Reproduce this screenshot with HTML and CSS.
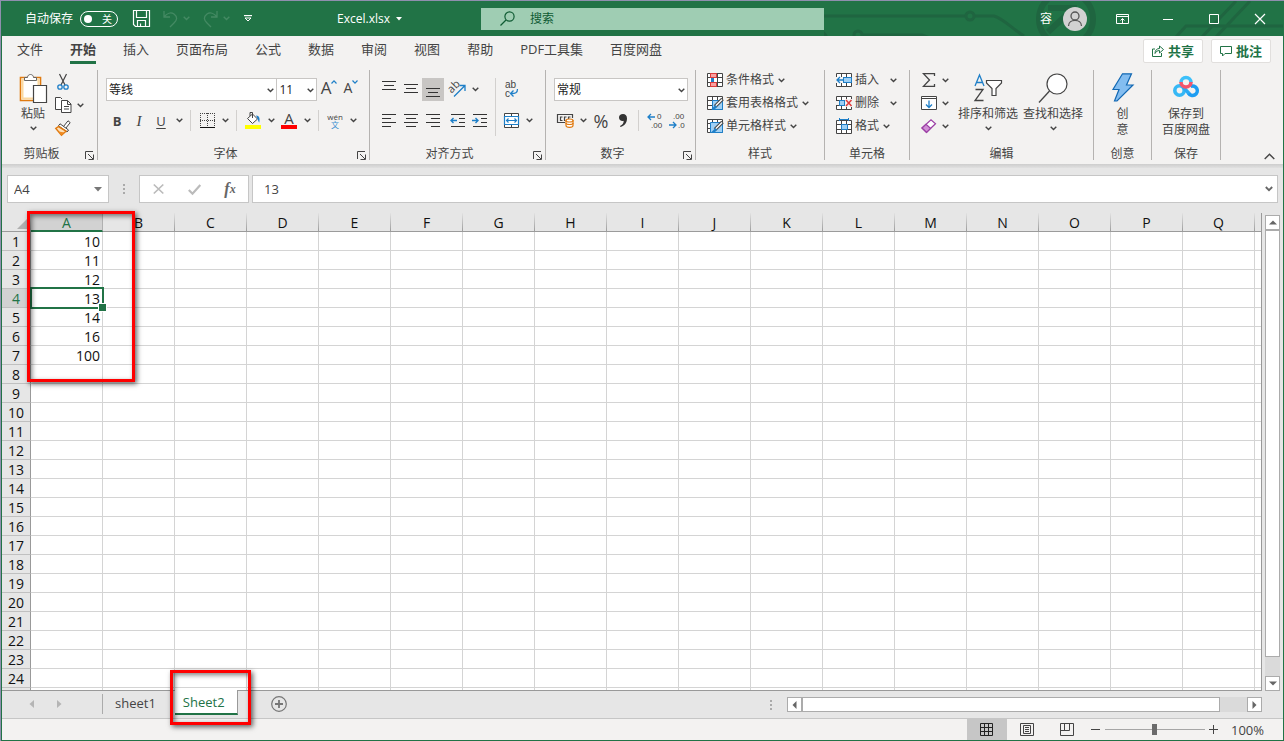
FILE: index.html
```html
<!DOCTYPE html>
<html lang="zh-CN">
<head>
    <meta charset="UTF-8">
    <meta name="viewport" content="width=device-width, initial-scale=1.0">
    <title>Excel.xlsx</title>
    <link rel="stylesheet" href="styles.css">
</head>
<body>
    <!-- Shared symbols -->
    <svg class="symbols" aria-hidden="true">
        <symbol id="chevron" viewBox="0 0 7 5"><path d="M.7 .8 3.5 3.6 6.3 .8" fill="none" stroke="currentColor" stroke-width="1.4"/></symbol>
        <symbol id="launcher" viewBox="0 0 9 9"><path d="M.5 8V.5H8M3 3l5 5M8.5 3.5v5h-5" fill="none" stroke="#444"/></symbol>
        <symbol id="grid" viewBox="0 0 16 14"><path d="M.5 .5h15v13H.5zM.5 4.5h15M.5 9.5h15M5.5 .5v13M10.5 .5v13" fill="#fff" stroke="#444"/></symbol>
    </svg>

    <div class="window">
        <header class="titlebar">
            <div class="titlebar-left">
                <label class="autosave" for="autosave">自动保存</label>
                <span class="toggle">
                    <input type="checkbox" id="autosave">
                    <span class="toggle-text">关</span>
                </span>
                <button class="quick save" aria-label="保存">
                    <svg width="17" height="17" viewBox="0 0 17 17" fill="none" stroke="#fff"><path d="M.5 .5h16v16H2.5l-2-2zM3.5 .5v7h10v-7M4.5 16.5v-6h8v6M7.5 16.5v-3" stroke-width="1.2"/></svg>
                </button>
                <button class="quick undo" aria-label="撤消">
                    <svg width="15" height="16" viewBox="0 0 15 16" fill="none" stroke="currentColor" stroke-width="1.3"><path d="M1 0v6h6M1 6C4 2 8 1 11 3c4 3 3 6 0 9l-4 4"/></svg>
                    <svg class="chev" width="7" height="5"><use href="#chevron"/></svg>
                </button>
                <button class="quick redo" aria-label="恢复">
                    <svg width="15" height="16" viewBox="0 0 15 16" fill="none" stroke="currentColor" stroke-width="1.3"><path d="M14 0v6H8M14 6C11 2 7 1 4 3c-4 3-3 6 0 9l4 4"/></svg>
                    <svg class="chev" width="7" height="5"><use href="#chevron"/></svg>
                </button>
                <button class="quick customize" aria-label="自定义快速访问工具栏">
                    <svg width="8" height="7" viewBox="0 0 8 7"><path d="M0 0h8v1.2H0z" fill="#fff"/><path d="M1 3h6L4 6z" fill="none" stroke="#fff"/></svg>
                </button>
                <button class="doc-name">Excel.xlsx <svg width="6" height="4" viewBox="0 0 6 4"><path d="M0 0h6L3 3.5z" fill="#fff"/></svg></button>
            </div>
            <label class="search">
                <svg width="15" height="15" viewBox="0 0 15 15" fill="none" stroke="#0f5b33" stroke-width="1.2"><circle cx="9.5" cy="5.5" r="4.6"/><path d="M6 9 .5 14.5"/></svg>
                <input type="text" placeholder="搜索" aria-label="搜索">
            </label>
            <div class="titlebar-right">
                <svg class="circuit" width="459" height="35" viewBox="0 0 459 35" fill="none" stroke="#1f6540" stroke-width="4">
                    <path d="M0 15h142M150 15h20c10 3 17 12 30 20M38 34h60l8 3M352 36l10-11h97M378 36l34-36M392 36l34-36" stroke-width="3"/>
                    <circle cx="146" cy="15" r="4" stroke-width="3"/>
                    <circle cx="34" cy="34" r="4" stroke-width="3"/>
                    <circle cx="-13" cy="44" r="17"/>
                    <circle cx="242" cy="18" r="27" stroke-width="6"/>
                    <path d="M224 7h26v22M224 31l24-22" stroke-width="6"/>
                </svg>
                <span class="user">容</span>
                <span class="avatar">
                    <svg width="24" height="24" viewBox="0 0 24 24" fill="none" stroke="#555" stroke-width="1.3"><circle cx="12" cy="9" r="4"/><path d="M5.500 19c0-7.500 13-7.500 13 0"/></svg>
                </span>
                <button class="win-btn" aria-label="功能区显示选项">
                    <svg width="13" height="10" viewBox="0 0 13 10" fill="none" stroke="#fff"><path d="M.5 .5h12v9H.5zM.5 2.500h12M6.500 9V4.500M4.500 6.500l2-2 2 2"/></svg>
                </button>
                <button class="win-btn" aria-label="最小化">
                    <svg width="10" height="10" viewBox="0 0 10 10"><path d="M0 5.500h10" stroke="#fff"/></svg>
                </button>
                <button class="win-btn" aria-label="最大化">
                    <svg width="10" height="10" viewBox="0 0 10 10"><path d="M.5 .5h9v9h-9z" fill="none" stroke="#fff"/></svg>
                </button>
                <button class="win-btn" aria-label="关闭">
                    <svg width="10" height="10" viewBox="0 0 10 10"><path d="M0 0l10 10M10 0 0 10" stroke="#fff" stroke-width="1.200"/></svg>
                </button>
            </div>
        </header>

        <nav class="tabs">
            <button class="tab">文件</button>
            <button class="tab active">开始</button>
            <button class="tab">插入</button>
            <button class="tab">页面布局</button>
            <button class="tab">公式</button>
            <button class="tab">数据</button>
            <button class="tab">审阅</button>
            <button class="tab">视图</button>
            <button class="tab">帮助</button>
            <button class="tab">PDF工具集</button>
            <button class="tab">百度网盘</button>
            <div class="tab-actions">
                <button class="action">
                    <svg width="12" height="12" viewBox="0 0 12 12" fill="none" stroke="#217346"><path d="M3 4H.5v7.500h9V8M3 8.500C3 5 5 3.500 7.500 3.500V1l4 3.500-4 3.500V5.500C5.500 5.500 4 6.500 3 8.500z"/></svg>
                    共享
                </button>
                <button class="action">
                    <svg width="12" height="12" viewBox="0 0 12 12" fill="none" stroke="#217346"><path d="M.5 1.500h11v7H5l-2.500 2.500V8.500h-2z"/></svg>
                    批注
                </button>
            </div>
        </nav>

        <section class="ribbon">
            <div class="group clipboard">
                <div class="group-body">
                    <button class="big paste">
                        <svg width="28" height="32" viewBox="0 0 28 32"><path d="M1.500 4.500h20v23h-20z" fill="#fff" stroke="#e07a10" stroke-width="1.600"/><path d="M3.500 6.500h16v19h-16z" fill="#fff" stroke="#fbd9a0" stroke-width="2"/><path d="M5.500 7.500v-3h3c0-4 6-4 6 0h3v3z" fill="#fff" stroke="#666"/><path d="M14.500 12.500h13v17h-13z" fill="#fff" stroke="#444" stroke-width="1.200"/></svg>
                        <span>粘贴</span>
                        <svg class="chev" width="7" height="5"><use href="#chevron"/></svg>
                    </button>
                    <div class="list">
                        <button class="item" aria-label="剪切">
                            <svg width="16" height="16" viewBox="0 0 16 16" fill="none"><path d="M4.500 0l5.500 11M11.500 0 6 11" stroke="#444" stroke-width="1.200"/><circle cx="5" cy="13" r="2.200" stroke="#1e7fc8" stroke-width="1.300"/><circle cx="11" cy="13" r="2.200" stroke="#1e7fc8" stroke-width="1.300"/></svg>
                        </button>
                        <button class="item" aria-label="复制">
                            <svg width="17" height="16" viewBox="0 0 17 16" fill="#fff" stroke="#444"><path d="M6.500 12.500h-6V.5h5l1.500 1.500"/><path d="M6.500 3.500h6l3.500 3.500v8.500H6.500zM12.500 3.500v4h3.500M9 9.500h5M9 12h5"/></svg>
                            <svg class="chev" width="7" height="5"><use href="#chevron"/></svg>
                        </button>
                        <button class="item" aria-label="格式刷">
                            <svg width="16" height="16" viewBox="0 0 16 16"><path d="M8.500 6.500 13 .8l2.200 1.800-4.700 6z" fill="#fff" stroke="#444"/><path d="M5 3.800l8.500 6.200-1.500 2L3.500 5.800z" fill="#fff" stroke="#444"/><path d="M3.500 6.500.8 8.500 6.500 15.200l4.500-4z" fill="#fde0b8" stroke="#e07a10" stroke-width="1.500"/><path d="M3.500 11.500 6.500 15l3-2.500z" fill="#f08a20"/></svg>
                        </button>
                    </div>
                </div>
                <div class="group-label">剪贴板<button class="launcher" aria-label="剪贴板设置"><svg width="9" height="9"><use href="#launcher"/></svg></button></div>
            </div>

            <div class="group font">
                <div class="group-body rows">
                    <div class="row">
                        <span class="combo name">
                            <select aria-label="字体"><option>等线</option></select>
                            <svg class="chev" width="7" height="5"><use href="#chevron"/></svg>
                        </span>
                        <span class="combo size">
                            <select aria-label="字号"><option>11</option></select>
                            <svg class="chev" width="7" height="5"><use href="#chevron"/></svg>
                        </span>
                        <button class="btn grow" aria-label="增大字号"><span>A</span><svg width="6" height="4" viewBox="0 0 6 4"><path d="M.5 3.500 3 .8l2.500 2.700" fill="none" stroke="#1e7fc8" stroke-width="1.200"/></svg></button>
                        <button class="btn shrink" aria-label="减小字号"><span>A</span><svg width="6" height="4" viewBox="0 0 6 4"><path d="M.5 .5 3 3.200 5.500 .5" fill="none" stroke="#1e7fc8" stroke-width="1.200"/></svg></button>
                    </div>
                    <div class="row">
                        <button class="btn bold">B</button>
                        <button class="btn italic">I</button>
                        <button class="btn underline">U</button>
                        <button class="drop" aria-label="下划线选项"><svg class="chev" width="7" height="5"><use href="#chevron"/></svg></button>
                        <span class="sep"></span>
                        <button class="btn" aria-label="边框"><svg width="15" height="15" viewBox="0 0 15 15"><path d="M.5 0v14M14.500 0v14M7.500 0v14M0 .5h15M0 7.500h15" stroke="#444" stroke-dasharray="1 1" fill="none"/><path d="M0 14.500h15" stroke="#111"/></svg></button>
                        <button class="drop" aria-label="边框选项"><svg class="chev" width="7" height="5"><use href="#chevron"/></svg></button>
                        <span class="sep"></span>
                        <button class="btn" aria-label="填充颜色"><svg width="16" height="17" viewBox="0 0 16 17"><path d="M2.500 6.500 7.500 2l5 5-5 4.500z" fill="#fff" stroke="#444"/><path d="M7.500 6V.5H5V4" fill="none" stroke="#444"/><path d="M11 3.500c3.500 0 4 3 3.300 7-1-.5-1.500-4-3.300-7z" fill="#1e7fc8"/><path d="M0 13h16v4H0z" fill="#ff0"/></svg></button>
                        <button class="drop" aria-label="填充颜色选项"><svg class="chev" width="7" height="5"><use href="#chevron"/></svg></button>
                        <button class="btn color" aria-label="字体颜色"><span>A</span></button>
                        <button class="drop" aria-label="字体颜色选项"><svg class="chev" width="7" height="5"><use href="#chevron"/></svg></button>
                        <span class="sep"></span>
                        <button class="btn phonetic"><span>wén</span><span class="han">文</span></button>
                        <button class="drop" aria-label="拼音选项"><svg class="chev" width="7" height="5"><use href="#chevron"/></svg></button>
                    </div>
                </div>
                <div class="group-label">字体<button class="launcher" aria-label="字体设置"><svg width="9" height="9"><use href="#launcher"/></svg></button></div>
            </div>

            <div class="group align">
                <div class="group-body">
                    <div class="rows">
                        <div class="row">
                            <button class="btn" aria-label="顶端对齐"><svg width="14" height="17" viewBox="0 0 14 17"><path d="M0 .5h14M2 4.500h10M0 8.500h14" stroke="#333"/></svg></button>
                            <button class="btn" aria-label="垂直居中"><svg width="14" height="17" viewBox="0 0 14 17"><path d="M0 3.500h14M2 7.500h10M0 11.500h14" stroke="#333"/></svg></button>
                            <button class="btn pressed" aria-label="底端对齐"><svg width="14" height="17" viewBox="0 0 14 17"><path d="M0 7.500h14M2 11.500h10M0 15.500h14" stroke="#333"/></svg></button>
                            <button class="btn indent" aria-label="方向"><svg width="17" height="17" viewBox="0 0 17 17"><text x="5" y="9" text-anchor="middle" transform="rotate(-45 5 6)" font-size="11" fill="#444">ab</text><path d="M5 15.500 15.500 5M10.500 4.500h5.500V10" fill="none" stroke="#1e7fc8" stroke-width="1.300"/></svg></button>
                            <button class="drop" aria-label="方向选项"><svg class="chev" width="7" height="5"><use href="#chevron"/></svg></button>
                        </div>
                        <div class="row">
                            <button class="btn" aria-label="左对齐"><svg width="14" height="13" viewBox="0 0 14 13"><path d="M0 .5h14M0 4.500h9M0 8.500h14M0 12.500h9" stroke="#333"/></svg></button>
                            <button class="btn" aria-label="居中"><svg width="14" height="13" viewBox="0 0 14 13"><path d="M0 .5h14M2 4.500h10M0 8.500h14M2 12.500h10" stroke="#333"/></svg></button>
                            <button class="btn" aria-label="右对齐"><svg width="14" height="13" viewBox="0 0 14 13"><path d="M0 .5h14M5 4.500h9M0 8.500h14M5 12.500h9" stroke="#333"/></svg></button>
                            <button class="btn indent" aria-label="减少缩进"><svg width="15" height="13" viewBox="0 0 15 13"><path d="M1 .5h14M9 4.500h6M9 8.500h6M1 12.500h14" stroke="#333"/><path d="M7 6.500H1M3.500 4 1 6.500 3.500 9" fill="none" stroke="#1e7fc8" stroke-width="1.400"/></svg></button>
                            <button class="btn" aria-label="增加缩进"><svg width="15" height="13" viewBox="0 0 15 13"><path d="M1 .5h14M9 4.500h6M9 8.500h6M1 12.500h14" stroke="#333"/><path d="M0 6.500h6M3.500 4 6 6.500 3.500 9" fill="none" stroke="#1e7fc8" stroke-width="1.400"/></svg></button>
                        </div>
                    </div>
                    <span class="tall-sep"></span>
                    <div class="rows">
                        <div class="row">
                            <button class="btn wrap" aria-label="自动换行"><svg width="15" height="17" viewBox="0 0 15 17"><text x="1" y="7" font-size="10">ab</text><text x="1" y="16" font-size="10">c</text><path d="M13.500 8c0 4-2 4.500-6.500 4.500M9.500 9.500 6.500 12.500l3 3" fill="none" stroke="#1e7fc8" stroke-width="1.300"/></svg></button>
                        </div>
                        <div class="row">
                            <button class="btn" aria-label="合并后居中"><svg width="15" height="15" viewBox="0 0 15 15"><path d="M.5 .5h14v14H.5zM7.500 .5v14" fill="#fff" stroke="#444"/><path d="M.5 3.500h14v8H.5z" fill="#fff" stroke="#1e7fc8" stroke-width="1.200"/><path d="M2.500 7.500h10M4.500 5.500l-2 2 2 2M10.500 5.500l2 2-2 2" fill="none" stroke="#1e7fc8" stroke-width="1.200"/></svg></button>
                            <button class="drop" aria-label="合并选项"><svg class="chev" width="7" height="5"><use href="#chevron"/></svg></button>
                        </div>
                    </div>
                </div>
                <div class="group-label">对齐方式<button class="launcher" aria-label="对齐设置"><svg width="9" height="9"><use href="#launcher"/></svg></button></div>
            </div>

            <div class="group number">
                <div class="group-body rows">
                    <div class="row">
                        <span class="combo format">
                            <select aria-label="数字格式"><option>常规</option></select>
                            <svg class="chev" width="7" height="5"><use href="#chevron"/></svg>
                        </span>
                    </div>
                    <div class="row">
                        <button class="btn" aria-label="会计数字格式"><svg width="17" height="15" viewBox="0 0 17 15"><path d="M8 9.500H.5v-8h15V5M5.500 4h-2v3.500h2M7.500 8V4h2M11.500 6V4h2" fill="none" stroke="#444" stroke-width="1.200"/><path d="M9 7.500v5c0 2.500 7 2.500 7 0v-5z" fill="#fff" stroke="#e07a10" stroke-width="1.200"/><ellipse cx="12.500" cy="7.500" rx="3.500" ry="1.500" fill="#fff" stroke="#e07a10" stroke-width="1.200"/><path d="M9 10c0 2 7 2 7 0" fill="none" stroke="#e07a10" stroke-width="1.200"/></svg></button>
                        <button class="drop" aria-label="会计格式选项"><svg class="chev" width="7" height="5"><use href="#chevron"/></svg></button>
                        <button class="btn percent">%</button>
                        <button class="btn" aria-label="千位分隔样式"><svg width="8" height="13" viewBox="0 0 8 13"><path d="M4 0C1.500 0 0 1.500 0 3.500S1.500 7 3.500 7c.5 0 1-.2 1.200-.3C4.700 9 3.500 11 1 12l.5 1C5.500 12 8 8.500 8 4.500 8 1.500 6.500 0 4 0z" fill="#333"/></svg></button>
                        <span class="sep"></span>
                        <button class="btn decimals" aria-label="增加小数位数"><svg width="16" height="17" viewBox="0 0 16 17"><text x="10" y="7" font-size="8">0</text><text x="4" y="16" font-size="8">.00</text><path d="M8 5H1M4 2 1 5l3 3" fill="none" stroke="#1e7fc8" stroke-width="1.300"/></svg></button>
                        <button class="btn decimals" aria-label="减少小数位数"><svg width="16" height="17" viewBox="0 0 16 17"><text x="4" y="7" font-size="8">.00</text><text x="9" y="16" font-size="8">.0</text><path d="M0 13h7M4 10l3 3-3 3" fill="none" stroke="#1e7fc8" stroke-width="1.300"/></svg></button>
                    </div>
                </div>
                <div class="group-label">数字<button class="launcher" aria-label="数字设置"><svg width="9" height="9"><use href="#launcher"/></svg></button></div>
            </div>

            <div class="group styles">
                <div class="group-body list">
                    <button class="item">
                        <svg width="16" height="14" viewBox="0 0 16 14"><use href="#grid" width="16" height="14"/><path d="M3.500 .5h6v4h-6zM3.500 9.500h6v4h-6z" fill="#f9a0a0" stroke="#e03a3a"/><path d="M4 5h3v4H4z" fill="#1e7fc8"/></svg>
                        <span>条件格式</span><svg class="chev" width="7" height="5"><use href="#chevron"/></svg>
                    </button>
                    <button class="item">
                        <svg width="16" height="14" viewBox="0 0 16 14"><use href="#grid" width="16" height="14"/><path d="M5.500 4.500h10v9h-10z" fill="#9fd0f5" stroke="#1e7fc8"/><path d="M15.500 3 8 10.500" stroke="#444" stroke-width="3.500"/><path d="M15 3.500 8 10.500" stroke="#fff" stroke-width="1.500"/><path d="M8.500 9 5 12.500 4.500 14h3L10 10.500z" fill="#1e7fc8"/></svg>
                        <span>套用表格格式</span><svg class="chev" width="7" height="5"><use href="#chevron"/></svg>
                    </button>
                    <button class="item">
                        <svg width="16" height="14" viewBox="0 0 16 14"><use href="#grid" width="16" height="14"/><path d="M3.500 3.500h12v10h-12z" fill="#9fd0f5" stroke="#1e7fc8"/><path d="M15.500 3 8 10.500" stroke="#444" stroke-width="3.500"/><path d="M15 3.500 8 10.500" stroke="#fff" stroke-width="1.500"/><path d="M8.500 9 5 12.500 4.500 14h3L10 10.500z" fill="#1e7fc8"/></svg>
                        <span>单元格样式</span><svg class="chev" width="7" height="5"><use href="#chevron"/></svg>
                    </button>
                </div>
                <div class="group-label">样式</div>
            </div>

            <div class="group cells">
                <div class="group-body list">
                    <button class="item wide">
                        <svg width="16" height="14" viewBox="0 0 16 14"><use href="#grid" width="16" height="14"/><path d="M7.500 4.500h8v5h-8z" fill="#9fd0f5" stroke="#1e7fc8"/><path d="M0 4h7v6H0z" fill="#f3f2f1"/><path d="M8 7H1M4 4 1 7l3 3" fill="none" stroke="#1e7fc8" stroke-width="1.300"/></svg>
                        <span>插入</span><svg class="chev" width="7" height="5"><use href="#chevron"/></svg>
                    </button>
                    <button class="item wide">
                        <svg width="16" height="14" viewBox="0 0 16 14"><use href="#grid" width="16" height="14"/><path d="M9 3h7v8H9zM0 5h4v4H0z" fill="#f3f2f1"/><path d="M3.500 4.500h5v5h-5z" fill="#9fd0f5" stroke="#1e7fc8"/><path d="M10 4l5.500 6M15.500 4 10 10" stroke="#e03a3a" stroke-width="1.500"/></svg>
                        <span>删除</span><svg class="chev" width="7" height="5"><use href="#chevron"/></svg>
                    </button>
                    <button class="item">
                        <svg width="16" height="16" viewBox="0 0 16 16"><use href="#grid" y="2" width="16" height="14"/><path d="M5.500 6.500h6v5h-6z" fill="#9fd0f5" stroke="#1e7fc8"/><path d="M3.500 0v3M12.500 0v3M3.500 1.500h9" stroke="#1e7fc8"/></svg>
                        <span>格式</span><svg class="chev" width="7" height="5"><use href="#chevron"/></svg>
                    </button>
                </div>
                <div class="group-label">单元格</div>
            </div>

            <div class="group editing">
                <div class="group-body">
                    <div class="list">
                        <button class="item" aria-label="自动求和">
                            <svg width="16" height="14" viewBox="0 0 16 14"><path d="M13.500 3V.7H2.500L8.500 7l-6 6.300h11V11" fill="none" stroke="#444" stroke-width="1.300"/></svg>
                            <svg class="chev" width="7" height="5"><use href="#chevron"/></svg>
                        </button>
                        <button class="item" aria-label="填充">
                            <svg width="16" height="14" viewBox="0 0 16 14"><path d="M.5 .5h15v13H.5zM.5 2.500h15" fill="#fff" stroke="#444"/><path d="M8 4.500v7M5 8.500l3 3 3-3" fill="none" stroke="#1e7fc8" stroke-width="1.300"/></svg>
                            <svg class="chev" width="7" height="5"><use href="#chevron"/></svg>
                        </button>
                        <button class="item" aria-label="清除">
                            <svg width="16" height="14" viewBox="0 0 16 14"><path d="M1 9 10 .7l4.500 4L5.500 13.300z" fill="#fff" stroke="#9b3fa5" stroke-width="1.200"/><path d="M1 9l4-3.700 4.500 4-4 4z" fill="#d08fd6" stroke="#9b3fa5" stroke-width="1.200"/></svg>
                            <svg class="chev" width="7" height="5"><use href="#chevron"/></svg>
                        </button>
                    </div>
                    <button class="big">
                        <svg width="30" height="32" viewBox="0 0 30 32"><path d="M2 13 6.500 2 11 13M3.500 9.500h6" fill="none" stroke="#1e7fc8" stroke-width="1.300"/><path d="M2.500 16.500H10L2 27.500h8.500" fill="none" stroke="#444" stroke-width="1.300"/><path d="M13.500 7.500h15V10L23 15.500v7h-4v-7L13.500 10z" fill="#fff" stroke="#444" stroke-width="1.200"/></svg>
                        <span>排序和筛选</span>
                        <svg class="chev" width="7" height="5"><use href="#chevron"/></svg>
                    </button>
                    <button class="big">
                        <svg width="30" height="32" viewBox="0 0 30 32"><circle cx="19" cy="11" r="10" fill="#fff" stroke="#444" stroke-width="1.200"/><path d="M11.500 18 1 29.500" stroke="#444" stroke-width="1.300"/></svg>
                        <span>查找和选择</span>
                        <svg class="chev" width="7" height="5"><use href="#chevron"/></svg>
                    </button>
                </div>
                <div class="group-label">编辑</div>
            </div>

            <div class="group ideas">
                <div class="group-body centered">
                    <button class="big">
                        <svg width="22" height="32" viewBox="0 0 22 32"><path d="M10.500 .8h9L14.500 12h6.500L5 28h-2.500l4.500-11.500H1z" fill="#83bdf0" stroke="#1268b3" stroke-width="1.200"/></svg>
                        <span>创<br>意</span>
                    </button>
                </div>
                <div class="group-label">创意</div>
            </div>

            <div class="group netdisk">
                <div class="group-body centered">
                    <button class="big">
                        <svg width="26" height="32" viewBox="0 0 26 32" fill="none" stroke-width="3.600"><circle cx="6.500" cy="17.500" r="4.700" stroke="#36b8f5"/><path d="M15.500 20a4.700 4.700 0 1 0 2-6.500" stroke="#1e9df2"/><path d="M10 14l6 6.500" stroke="#2aaaf4"/><path d="M8 9.500a5 5 0 0 1 10 0" stroke="#3cc0fa"/><path d="M8 9a5 5 0 0 0 10 0" stroke="#f4556c"/></svg>
                        <span>保存到<br>百度网盘</span>
                    </button>
                </div>
                <div class="group-label">保存</div>
            </div>

            <button class="collapse" aria-label="折叠功能区"><svg width="11" height="7" viewBox="0 0 11 7"><path d="M.7 6 5.500 1.200 10.300 6" fill="none" stroke="#444" stroke-width="1.400"/></svg></button>
        </section>

        <section class="formula-bar">
            <div class="name-box">
                <input type="text" value="A4" aria-label="名称框">
                <button aria-label="名称列表"><svg width="8" height="5" viewBox="0 0 8 5"><path d="M0 0h8L4 4.500z" fill="#777"/></svg></button>
            </div>
            <span class="dots"></span>
            <div class="formula-buttons">
                <button aria-label="取消"><svg width="11" height="10" viewBox="0 0 11 10"><path d="M.8 .5l9.500 9M10.300 .5l-9.500 9" stroke="#bbb" stroke-width="1.700"/></svg></button>
                <button aria-label="输入"><svg width="13" height="11" viewBox="0 0 13 11"><path d="M.8 6l3.700 3.700L12.300 1" fill="none" stroke="#bbb" stroke-width="2.200"/></svg></button>
                <button class="fx"><i>f</i><i class="x">x</i></button>
            </div>
            <div class="formula">
                <input type="text" value="13" aria-label="编辑栏">
                <button aria-label="展开编辑栏"><svg width="8" height="6" viewBox="0 0 8 6"><path d="M.8 1 4 4.200 7.200 1" fill="none" stroke="#666" stroke-width="1.800"/></svg></button>
            </div>
        </section>

        <main class="workspace">
            <div class="sheet">
                <table class="cells-table">
                    <thead><tr id="columnHeaders"></tr></thead>
                    <tbody id="rows"></tbody>
                </table>
            </div>
            <div class="vscroll">
                <button aria-label="向上滚动"><svg width="8" height="5" viewBox="0 0 8 5"><path d="M0 4.500h8L4 .5z" fill="#666"/></svg></button>
                <div class="thumb"></div>
                <div class="track"></div>
                <button aria-label="向下滚动"><svg width="8" height="5" viewBox="0 0 8 5"><path d="M0 .5h8L4 4.500z" fill="#666"/></svg></button>
            </div>
            <div class="mark mark-data"></div>
        </main>

        <div class="sheet-tabs">
            <button class="nav-arrow" aria-label="上一张"><svg width="5" height="8" viewBox="0 0 5 8"><path d="M5 0v8L.5 4z" fill="#b5b5b5"/></svg></button>
            <button class="nav-arrow" aria-label="下一张"><svg width="5" height="8" viewBox="0 0 5 8"><path d="M0 0v8l4.500-4z" fill="#b5b5b5"/></svg></button>
            <div class="tab-list">
                <button class="sheet-tab">sheet1</button>
                <button class="sheet-tab current">Sheet2<span class="mark mark-tab"></span></button>
            </div>
            <button class="add-sheet" aria-label="新工作表"><svg width="16" height="16" viewBox="0 0 16 16" fill="none" stroke="#767676"><circle cx="8" cy="8" r="7.300" stroke-width="1.200"/><path d="M8 4v8M4 8h8" stroke-width="1.800"/></svg></button>
            <span class="dots"></span>
            <div class="hscroll">
                <button aria-label="向左滚动"><svg width="5" height="8" viewBox="0 0 5 8"><path d="M4.500 0v8L.5 4z" fill="#666"/></svg></button>
                <div class="thumb"></div>
                <div class="track"></div>
                <button aria-label="向右滚动"><svg width="5" height="8" viewBox="0 0 5 8"><path d="M.5 0v8l4-4z" fill="#666"/></svg></button>
            </div>
        </div>

        <footer class="status">
            <button class="view on" aria-label="普通"><svg width="13" height="13" viewBox="0 0 13 13"><path d="M.5 .5h12v12H.5zM.5 4.500h12M.5 8.500h12M4.500 .5v12M8.500 .5v12" fill="none" stroke="#222"/></svg></button>
            <button class="view" aria-label="页面布局视图"><svg width="14" height="13" viewBox="0 0 14 13"><path d="M.5 .5h13v12H.5zM3.500 2.500h7v8h-7zM5 4.500h4M5 6.500h4M5 8.500h4" fill="none" stroke="#444"/></svg></button>
            <button class="view" aria-label="分页预览"><svg width="14" height="13" viewBox="0 0 14 13"><path d="M.5 .5h13v12H.5zM4.500 .5v7M9.500 .5v7M.5 7.500h9" fill="none" stroke="#444"/></svg></button>
            <button class="zoom-btn" aria-label="缩小"><svg width="9" height="9" viewBox="0 0 9 9"><path d="M0 4.500h9" stroke="#444"/></svg></button>
            <input class="zoom" type="range" min="0" max="100" value="50" aria-label="缩放">
            <button class="zoom-btn" aria-label="放大"><svg width="9" height="9" viewBox="0 0 9 9"><path d="M0 4.500h9M4.500 0v9" stroke="#444"/></svg></button>
            <span class="zoom-value">100%</span>
        </footer>
    </div>

    <script src="script.js"></script>
</body>
</html>
```

FILE: styles.css
```css
* {
    box-sizing: border-box;
}

body {
    margin: 0;
    background: #8f8fae;
    color: #444;
    font-family: "Open Sans", "Noto Sans CJK SC", sans-serif;
    font-size: 12px;
    line-height: 16px;
}

button,
input,
select {
    margin: 0;
    padding: 0;
    border: 0;
    background: none;
    color: inherit;
    font: inherit;
    outline: 0;
}

button {
    display: flex;
    align-items: center;
    justify-content: center;
    flex: none;
}

svg {
    display: block;
    flex: none;
    overflow: visible;
}

.symbols {
    position: absolute;
    width: 0;
    height: 0;
}

.window {
    display: flex;
    flex-direction: column;
    height: calc(100vh - 1px);
    margin: 1px 0 0 1px;
    border: 1px solid #217346;
    border-top: 0;
    background: #e6e6e6;
    overflow: hidden;
}

/* Title bar */
.titlebar {
    display: flex;
    align-items: center;
    height: 35px;
    background: #217346;
    color: #fff;
}

.titlebar-left {
    display: flex;
    align-items: center;
    flex: 1;
    padding-left: 23px;
}

.toggle {
    position: relative;
    margin: 0 15px 0 7px;
}

.toggle input {
    display: block;
    appearance: none;
    width: 38px;
    height: 16px;
    border: 1px solid #fff;
    border-radius: 8px;
}

.toggle input::before {
    content: "";
    display: block;
    width: 8px;
    height: 8px;
    margin: 3px;
    border-radius: 50%;
    background: #fff;
}

.toggle-text {
    position: absolute;
    top: 0;
    right: 6px;
    font-size: 10px;
    pointer-events: none;
}

.quick {
    gap: 5px;
}

.undo,
.redo {
    color: #448a63;
    margin-left: 13px;
}

.customize {
    margin-left: 14px;
}

.doc-name {
    gap: 6px;
    margin: 0 79px 0 auto;
}

.search {
    display: flex;
    align-items: center;
    gap: 15px;
    width: 343px;
    height: 22px;
    padding-left: 19px;
    background: #9fcdb3;
    color: #0f5b33;
}

.search input {
    flex: 1;
    min-width: 0;
}

.search input::placeholder {
    color: #0f5b33;
    opacity: 1;
}

.titlebar-right {
    position: relative;
    display: flex;
    align-items: center;
    justify-content: flex-end;
    width: 459px;
    height: 35px;
    overflow: hidden;
}

.circuit {
    position: absolute;
    top: 0;
    right: 0;
}

.user,
.avatar,
.win-btn {
    position: relative;
}

.avatar {
    margin: 0 12px 0 11px;
    border-radius: 50%;
    background: #d2d2d2;
}

.win-btn {
    width: 46px;
    height: 35px;
}

/* Ribbon tabs */
.tabs {
    display: flex;
    gap: 27px;
    height: 32px;
    padding: 0 12px 0 15px;
    background: #f3f2f1;
    font-size: 13px;
}

.tab {
    height: 28px;
    border-bottom: 3px solid transparent;
}

.tab.active {
    border-color: #217346;
    font-weight: bold;
}

.tab-actions {
    display: flex;
    gap: 8px;
    margin: 3px 0 5px auto;
}

.action {
    gap: 4px;
    width: 60px;
    border: 1px solid #e1dfdd;
    border-radius: 2px;
    background: #fff;
    color: #217346;
    font-weight: bold;
}

/* Ribbon */
.ribbon {
    display: flex;
    height: 100px;
    padding: 2px 0 8px;
    background: linear-gradient(#f3f2f1 96px, #cdcdcd 96px, #e0e0e0);
}

.group {
    display: flex;
    flex-direction: column;
    flex: none;
    border-right: 1px solid #b5b3b1;
}

.group-body {
    display: flex;
    flex: 1;
}

.group-body.centered {
    justify-content: center;
}

.group-label {
    position: relative;
    padding: 2px 16px 0 0;
    line-height: 12px;
    text-align: center;
}

.styles .group-label,
.cells .group-label,
.editing .group-label,
.ideas .group-label,
.netdisk .group-label {
    padding-right: 0;
}

.launcher {
    position: absolute;
    right: 3px;
    bottom: 0;
}

.clipboard { width: 96px; }
.font { width: 272px; }
.align { width: 176px; }
.number { width: 150px; }
.styles { width: 129px; }
.cells { width: 85px; }
.editing { width: 184px; }
.ideas { width: 58px; }
.netdisk { width: 69px; }

.font .group-body,
.align .group-body,
.number .group-body {
    padding: 8px 7px 0 8px;
}

.rows {
    display: flex;
    flex-direction: column;
    gap: 8px;
}

.row {
    display: flex;
    align-items: center;
    height: 23px;
}

.btn {
    width: 22px;
    height: 23px;
}

.drop {
    width: 14px;
    height: 23px;
}

.indent {
    margin-left: 2px;
}

.pressed {
    background: #c8c6c4;
}

.wrap text,
.decimals text {
    fill: #444;
    font-family: "Liberation Sans", sans-serif;
}

.sep {
    width: 1px;
    height: 21px;
    margin: 0 5px 0 4px;
    background: #d2d0ce;
}

.tall-sep {
    width: 1px;
    height: 58px;
    margin: 0 4px 0 auto;
    background: #d2d0ce;
}

.align .rows:last-child {
    width: 38px;
}

.combo {
    position: relative;
    height: 23px;
}

.combo select {
    display: block;
    appearance: none;
    width: 100%;
    height: 23px;
    padding: 0 2px;
    border: 1px solid #c8c6c4;
    background: #fff;
    color: #222;
}

.combo .chev {
    position: absolute;
    top: 10px;
    right: 3px;
    pointer-events: none;
}

.combo.name { width: 172px; }
.combo.size { width: 41px; margin-left: -1px; }
.combo.format { width: 134px; }

.font .combo.name {
    width: 173px;
}

.grow,
.shrink {
    align-items: flex-start;
    padding-top: 2px;
}

.grow {
    font-size: 17px;
    margin-left: 1px;
}

.shrink {
    font-size: 14px;
}

.bold {
    font-weight: bold;
    font-size: 13px;
}

.italic {
    font-family: "Liberation Serif", serif;
    font-style: italic;
    font-size: 15px;
}

.underline {
    font-size: 13px;
    text-decoration: underline;
    text-underline-offset: 2px;
}

.color {
    font-size: 15px;
}

.color span {
    width: 16px;
    height: 17px;
    border-bottom: 4px solid #f00;
    line-height: 13px;
}

.phonetic {
    flex-direction: column;
    font-size: 8px;
    line-height: 8px;
}

.phonetic .han {
    color: #3a8fd0;
}

.percent {
    font-size: 18px;
}

/* Stacked small commands */
.list {
    display: flex;
    flex-direction: column;
    align-items: flex-start;
    gap: 3px;
}

.item {
    gap: 3px;
    height: 20px;
}

.item span + .chev {
    margin-left: 1px;
}

.item.wide span + .chev {
    margin-left: 8px;
}

.styles .list,
.cells .list {
    padding-left: 11px;
}

.clipboard .list {
    padding: 2px 0 0 8px;
}

.clipboard .item,
.editing .item {
    gap: 5px;
}

.editing .list {
    padding: 0 9px 0 11px;
}

/* Large commands */
.big {
    flex-direction: column;
    justify-content: flex-start;
    padding-top: 3px;
}

.big span {
    margin-top: 1px;
}

.big .chev {
    margin-top: 4px;
}

.big + .big {
    margin-left: 5px;
}

.paste {
    padding-left: 17px;
}

.collapse {
    align-self: flex-end;
    margin: 0 8px 0 auto;
}

/* Formula bar */
.formula-bar {
    display: flex;
    padding: 7px 5px 10px;
    font-size: 13px;
}

.name-box,
.formula-buttons,
.formula {
    display: flex;
    align-items: center;
    height: 28px;
    border: 1px solid #c6c6c6;
    background: #fff;
}

.name-box {
    width: 102px;
    padding: 0 6px;
}

.name-box input,
.formula input {
    flex: 1;
    min-width: 0;
}

.dots {
    width: 2px;
    height: 10px;
    background: repeating-linear-gradient(#aaa 0 2px, transparent 2px 4px);
    align-self: center;
}

.formula-bar .dots {
    margin: 0 14px;
}

.formula-buttons {
    width: 110px;
    justify-content: space-around;
    margin-right: 3px;
}

.formula-buttons button {
    width: 36px;
}

.fx {
    font-family: "Liberation Serif", serif;
    font-size: 16px;
    font-weight: bold;
    color: #666;
}

.fx .x {
    font-size: 12px;
}

.formula {
    flex: 1;
    padding: 0 4px 0 11px;
}

/* Worksheet */
.workspace {
    position: relative;
    display: flex;
    flex: 1;
    min-height: 0;
    padding-right: 3px;
}

.sheet {
    flex: 1;
    min-width: 0;
    border-right: 1px solid #999;
    border-bottom: 1px solid #999;
    background: #fff;
    overflow: hidden;
}

.cells-table {
    width: 1325px;
    table-layout: fixed;
    border-collapse: separate;
    border-spacing: 0;
    color: #111;
    font-size: 14px;
    line-height: 16px;
}

.cells-table th,
.cells-table td {
    height: 19px;
    padding: 2px 2px 0;
    border-right: 1px solid #d4d4d4;
    border-bottom: 1px solid #d4d4d4;
    font-weight: normal;
    text-align: right;
    white-space: nowrap;
}

.cells-table thead th {
    width: 72px;
    border-right: 1px solid;
    border-bottom: 1px solid #999;
    border-image: linear-gradient(#e6e6e6, #999) 1;
    background: #e6e6e6;
    text-align: center;
}

.cells-table thead th.corner {
    width: 29px;
}

.corner svg {
    margin-left: auto;
}

.cells-table tbody th {
    border-right-color: #999;
    border-bottom-color: #c0c0c0;
    background: #e6e6e6;
    text-align: center;
}

.cells-table th.selected {
    background: #d2d2d2;
    color: #217346;
}

.cells-table thead th.selected {
    border-image: none;
    border-right-color: #b0b0b0;
    border-bottom: 2px solid #217346;
    line-height: 15px;
}

.cells-table td.selected {
    position: relative;
}

.cells-table td.selected::before {
    content: "";
    position: absolute;
    inset: -2px -2px -2px -1px;
    border: 2px solid #217346;
}

.cells-table td.selected::after {
    content: "";
    position: absolute;
    right: -5px;
    bottom: -5px;
    width: 7px;
    height: 7px;
    border: 1px solid #fff;
    background: #217346;
}

/* Scroll bars */
.vscroll,
.hscroll {
    display: flex;
    background: #dadada;
}

.vscroll {
    flex-direction: column;
    width: 15px;
    margin: 2px 0 0 3px;
}

.vscroll button,
.hscroll button,
.thumb {
    border: 1px solid #ababab;
    background: #fff;
}

.vscroll button,
.hscroll button {
    width: 15px;
    height: 15px;
}

.vscroll .thumb { flex: 427; }
.vscroll .track { flex: 19; }
.hscroll .thumb { flex: 417; }
.hscroll .track { flex: 27; }

/* Sheet tabs */
.sheet-tabs {
    display: flex;
    height: 28px;
    padding: 0 21px 0 15px;
    border-bottom: 1px solid #c6c6c6;
    font-size: 13px;
}

.nav-arrow {
    width: 28px;
    height: 25px;
}

.tab-list {
    display: flex;
    margin-left: 29px;
    background: linear-gradient(#ababab, #ababab) no-repeat 0 3px / 1px 20px;
}

.sheet-tab {
    position: relative;
    height: 23px;
    padding: 0 12px;
}

.sheet-tab:first-child {
    padding: 0 19px 0 13px;
}

.sheet-tab.current {
    margin-top: -1px;
    height: 25px;
    border-right: 1px solid #999;
    border-bottom: 2px solid #217346;
    background: #fff;
    color: #217346;
    padding: 0 12px 0 8px;
}

.add-sheet {
    height: 26px;
    margin: 0 auto 0 33px;
}

.hscroll {
    width: 475px;
    margin: 6px 0 6px 15px;
}

/* Red frames over the data and the current tab */
.mark {
    position: absolute;
    border: 3px solid #f00;
    box-shadow: 2px 2px 5px rgba(0, 0, 0, .6), inset 2px 2px 5px rgba(0, 0, 0, .5);
    pointer-events: none;
}

.mark-data {
    top: -2px;
    left: 25px;
    width: 108px;
    height: 171px;
}

.mark-tab {
    inset: -20px -14px -12px -5px;
}

/* Status bar */
.status {
    display: flex;
    align-items: center;
    justify-content: flex-end;
    height: 21px;
    padding-right: 19px;
    background: #f3f2f1;
}

.view {
    width: 40px;
    height: 21px;
}

.view.on {
    background: #c6c6c6;
}

.zoom-btn {
    width: 18px;
    height: 21px;
}

.zoom {
    appearance: none;
    width: 100px;
    height: 11px;
    background: linear-gradient(#a6a6a6, #a6a6a6) no-repeat center / 100% 1px;
}

.zoom::-webkit-slider-thumb {
    appearance: none;
    width: 5px;
    height: 11px;
    background: #6b6b6b;
}

.zoom-value {
    margin-left: 8px;
    font-size: 13px;
}
```

FILE: script.js
```javascript
const columns = 'ABCDEFGHIJKLMNOPQ'.split('').concat('');
const columnA = [10, 11, 12, 13, 14, 16, 100];
const selectedRow = 4;
const rowCount = 24;

const columnHeaders = document.getElementById('columnHeaders');
const rows = document.getElementById('rows');

// Column headers, with the select-all corner first
columnHeaders.innerHTML = '<th class="corner"><svg width="11" height="11" viewBox="0 0 11 11"><path d="M11 0v11H0z" fill="#b0b0b0"/></svg></th>' +
    columns.map((name, i) => `<th class="${i === 0 ? 'selected' : ''}">${name}</th>`).join('');

// One extra unnumbered row runs under the bottom edge
for (let r = 1; r <= rowCount + 1; r++) {
    const row = document.createElement('tr');
    const header = document.createElement('th');
    header.textContent = r <= rowCount ? r : '';
    if (r === selectedRow) header.className = 'selected';
    row.appendChild(header);

    columns.forEach((name, i) => {
        const cell = document.createElement('td');
        if (i === 0 && columnA[r - 1] !== undefined) cell.textContent = columnA[r - 1];
        if (i === 0 && r === selectedRow) cell.className = 'selected';
        row.appendChild(cell);
    });
    rows.appendChild(row);
}
```
